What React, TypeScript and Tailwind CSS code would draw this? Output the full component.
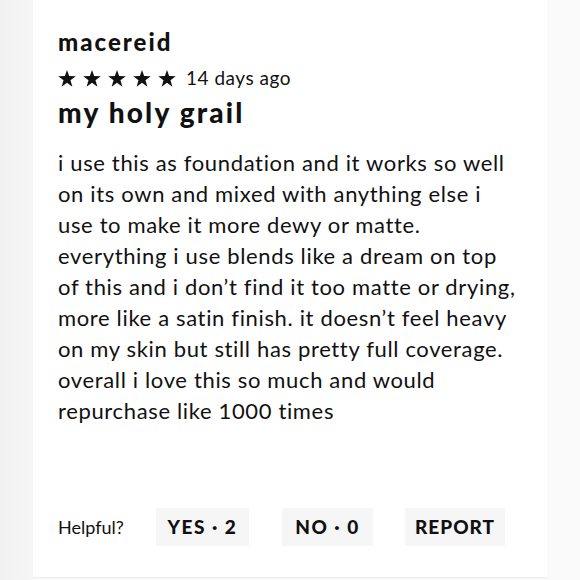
import React from "react";

const Star = () => (
  <svg width="18" height="17" viewBox="0 0 24 23" fill="#111">
    <polygon points="12,0 14.9,8.2 23.8,8.4 16.7,13.8 19.3,22.5 12,17.3 4.7,22.5 7.3,13.8 0.2,8.4 9.1,8.2" />
  </svg>
);

const lines = [
  "i use this as foundation and it works so well",
  "on its own and mixed with anything else i",
  "use to make it more dewy or matte.",
  "everything i use blends like a dream on top",
  "of this and i don\u2019t find it too matte or drying,",
  "more like a satin finish. it doesn\u2019t feel heavy",
  "on my skin but still has pretty full coverage.",
  "overall i love this so much and would",
  "repurchase like 1000 times",
];

export default function App() {
  return (
    <div
      className="w-[580px] h-[580px] flex bg-[#f8f8f8] text-[#111]"
      style={{ fontFamily: "Lato, 'Noto Sans', sans-serif" }}
    >
      <div className="w-[33px] h-full bg-gradient-to-r from-[#f1f1f1] to-[#f6f6f6]" />
      <div className="w-[514px] h-[578px] bg-white border-b border-[#ececec] flex flex-col pl-[25px] pt-[28px] pb-[31px]">
        <div className="text-[24px] leading-[28px] font-black tracking-[2px]">macereid</div>
        <div className="mt-[12px] h-[20px] flex items-center">
          <div className="flex gap-[7px]">
            <Star />
            <Star />
            <Star />
            <Star />
            <Star />
          </div>
          <span className="ml-[10px] text-[19px] leading-[20px] tracking-[0.5px]">14 days ago</span>
        </div>
        <div className="mt-[9px] text-[28px] leading-[30px] font-black tracking-[2.2px]">my holy grail</div>
        <div className="mt-[20px] text-[22px] leading-[31px] tracking-[0.65px]">
          {lines.map((l, i) => (
            <div key={i} className="whitespace-nowrap">{l}</div>
          ))}
        </div>
        <div className="mt-auto flex items-center h-[38px]">
          <span className="text-[18px] mr-[31px] w-[67px]">Helpful?</span>
          <button className="w-[93px] h-[38px] bg-[#f6f6f6] text-[19px] font-black tracking-[1.5px] flex items-center justify-center">
            YES · 2
          </button>
          <button className="ml-[33px] w-[91px] h-[38px] bg-[#f6f6f6] text-[19px] font-black tracking-[1.5px] flex items-center justify-center">
            NO · 0
          </button>
          <button className="ml-[32px] w-[100px] h-[38px] bg-[#f6f6f6] text-[19px] font-black tracking-[1px] flex items-center justify-center">
            REPORT
          </button>
        </div>
      </div>
      <div className="flex-1 h-full bg-[#fafafa]" />
    </div>
  );
}
